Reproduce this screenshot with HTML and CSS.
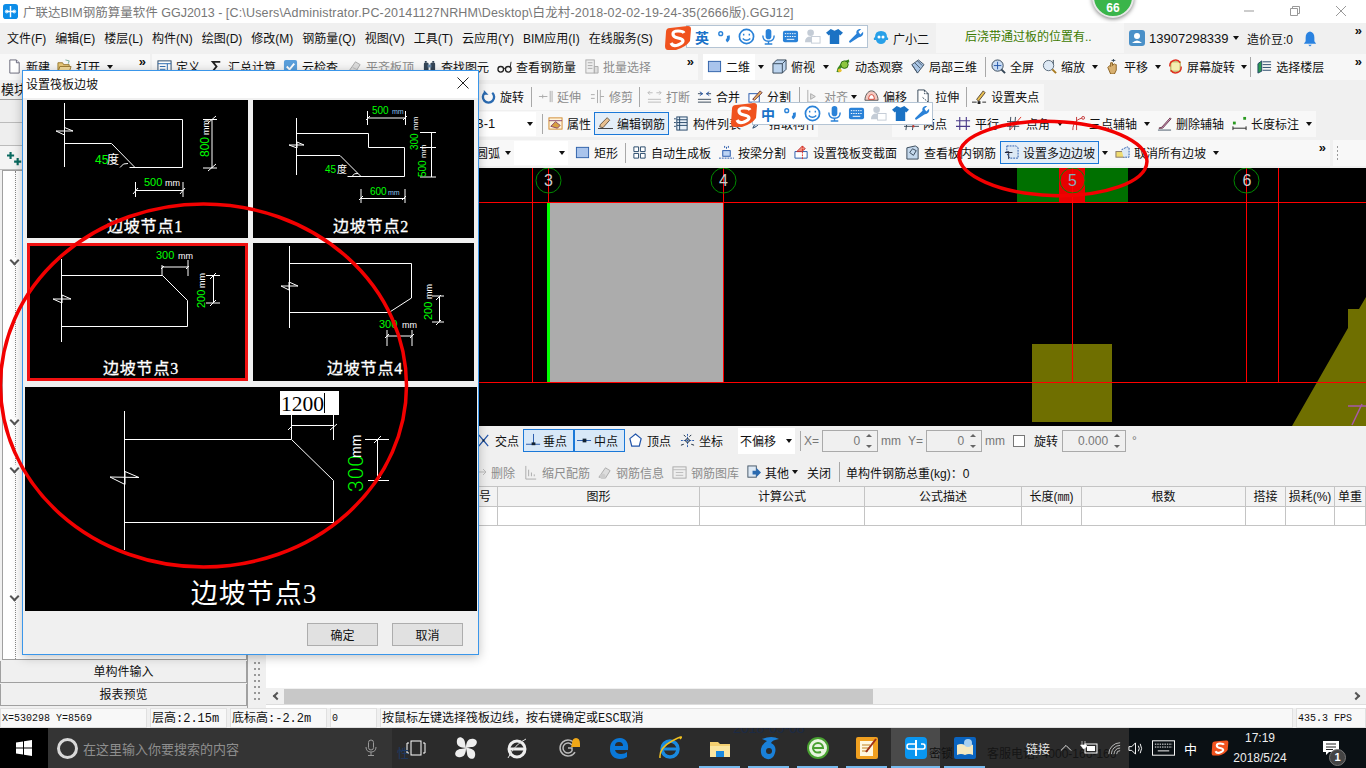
FILE: index.html
```html
<!DOCTYPE html>
<html lang="zh-CN">
<head>
<meta charset="utf-8">
<title>广联达BIM钢筋算量软件 GGJ2013</title>
<link rel="stylesheet" href="styles.css">
</head>
<body>
<svg class="defs" aria-hidden="true">
<symbol id="i-new" viewBox="0 0 16 16"><path d="M3 1h7l3 3v11H3z" fill="#fff" stroke="#667"/><path d="M10 1v3h3" fill="#dde" stroke="#667"/></symbol>
<symbol id="i-open" viewBox="0 0 16 16"><path d="M1 4h5l1 2h6v8H1z" fill="#e8c878" stroke="#9a7a30"/><path d="M3 8h12l-2 6H1z" fill="#f4dc9c" stroke="#9a7a30"/><path d="M9 1l4 1-1 3" fill="none" stroke="#7a9"/></symbol>
<symbol id="i-def" viewBox="0 0 16 16"><rect x="1" y="2" width="14" height="12" fill="#fff" stroke="#246"/><path d="M1 5h14M3 8h6M3 11h6M11 5v9" stroke="#2a6ab0"/></symbol>
<symbol id="i-sigma" viewBox="0 0 16 16"><path d="M12 3H4l4 5-4 5h8" fill="none" stroke="#222" stroke-width="2"/></symbol>
<symbol id="i-cloud" viewBox="0 0 16 16"><rect x="1" y="1" width="14" height="14" rx="2" fill="#5a9fdc"/><path d="M4 8l3 3 5-6" fill="none" stroke="#fff" stroke-width="2"/></symbol>
<symbol id="i-flat" viewBox="0 0 16 16"><path d="M2 13L9 3l5 3-5 8z" fill="#ddd" stroke="#aaa"/><path d="M6 9l6 3" stroke="#bbb"/></symbol>
<symbol id="i-find" viewBox="0 0 16 16"><rect x="2" y="4" width="5" height="9" rx="1" fill="#345"/><rect x="9" y="4" width="5" height="9" rx="1" fill="#345"/><path d="M6 6h4v3H6z" fill="#68a"/><path d="M4 2v2M12 2v2" stroke="#345" stroke-width="2"/></symbol>
<symbol id="i-glass" viewBox="0 0 16 16"><circle cx="4" cy="11" r="3" fill="none" stroke="#222" stroke-width="1.4"/><circle cx="12" cy="11" r="3" fill="none" stroke="#222" stroke-width="1.4"/><path d="M7 10h2M14 9l1-6" stroke="#222"/></symbol>
<symbol id="i-batch" viewBox="0 0 16 16"><rect x="2" y="1" width="9" height="14" fill="#eee" stroke="#aaa"/><path d="M4 4h5M4 7h5M4 10h5M11 8h4v7h-4z" fill="#ddd" stroke="#aaa"/></symbol>
<symbol id="i-sq" viewBox="0 0 16 16"><rect x="1.5" y="2.5" width="13" height="11" fill="#a9c4ec" stroke="#2d5fa8"/></symbol>
<symbol id="i-cube" viewBox="0 0 16 16"><path d="M1 5l4-4h10v10l-4 4H1z" fill="#bcd4ee" stroke="#345"/><path d="M1 5h10v10M11 5l4-4" fill="none" stroke="#345"/></symbol>
<symbol id="i-orbit" viewBox="0 0 16 16"><path d="M2 14C3 8 8 3 14 2" fill="none" stroke="#3a8a20" stroke-width="3"/><circle cx="9" cy="6" r="4" fill="#8cc63f" stroke="#2a6a10"/><circle cx="4" cy="12" r="2" fill="#e8c030"/></symbol>
<symbol id="i-l3d" viewBox="0 0 16 16"><path d="M2 6l7-5 6 5-7 9z" fill="#a8c4e4" stroke="#456"/><path d="M5 4l6 6M8 2l5 5M2 6l6 9" stroke="#456"/></symbol>
<symbol id="i-fs" viewBox="0 0 16 16"><circle cx="7" cy="7" r="6" fill="#c8dcf4" stroke="#345"/><path d="M7 3v8M3 7h8" stroke="#25a"/><path d="M11 11l4 4" stroke="#345" stroke-width="2"/></symbol>
<symbol id="i-zoom" viewBox="0 0 16 16"><circle cx="7" cy="7" r="5.5" fill="#dde8f4" stroke="#567"/><path d="M11 11l4 4" stroke="#a87a20" stroke-width="2"/><path d="M12 1v4" stroke="#345"/></symbol>
<symbol id="i-hand" viewBox="0 0 16 16"><path d="M3 9l2-2 1 1V4l2 0v3l2-2 1 1 1 0v6l-2 4H6z" fill="#d8b070" stroke="#8a6020"/><path d="M9 0v3M7 1.500h4" stroke="#345"/></symbol>
<symbol id="i-rot" viewBox="0 0 16 16"><rect x="3" y="3" width="10" height="10" fill="#f4eeb0" stroke="#a8a040"/><path d="M2 8a6 6 0 0 1 11-4M14 8a6 6 0 0 1-11 4" fill="none" stroke="#e03020" stroke-width="1.500"/></symbol>
<symbol id="i-floor" viewBox="0 0 16 16"><path d="M1 5l4-3v11l-4 2zM6 3h9M6 6h9M6 9h9M6 12h9" fill="#2a9a50" stroke="#246"/></symbol>
<symbol id="i-rotb" viewBox="0 0 16 16"><path d="M12 4a6 6 0 1 1-8 0" fill="none" stroke="#2a6ab0" stroke-width="2.500"/><path d="M3 1v5h5z" fill="#2a6ab0"/></symbol>
<symbol id="i-ext" viewBox="0 0 16 16"><path d="M1 8h9M4 8v0M13 2v12M15 2v12M5 6v4" fill="none" stroke="#aaa"/></symbol>
<symbol id="i-trim" viewBox="0 0 16 16"><path d="M1 6h4M1 10h4M8 1v14M11 1v14M11 8h4" fill="none" stroke="#aaa"/></symbol>
<symbol id="i-brk" viewBox="0 0 16 16"><path d="M1 4h5M10 4h5M1 11h14M1 14h14" stroke="#bbb"/><path d="M3 2L1 4l2 2M13 2l2 2-2 2" fill="none" stroke="#bbb"/></symbol>
<symbol id="i-mrg" viewBox="0 0 16 16"><path d="M1 5h5M10 5h5M1 11h14M1 14h14" stroke="#345"/><path d="M3 3l3 2-3 2M13 3l-3 2 3 2" fill="none" stroke="#25a"/></symbol>
<symbol id="i-spl" viewBox="0 0 16 16"><rect x="1" y="5" width="11" height="9" fill="#fff" stroke="#25a"/><path d="M5 11l8-9 2 2-8 8z" fill="#e8b060" stroke="#634"/></symbol>
<symbol id="i-aln" viewBox="0 0 16 16"><path d="M3 1v14M3 14h11M6 5l5 3-5 3z" fill="#ddd" stroke="#aaa"/></symbol>
<symbol id="i-off" viewBox="0 0 16 16"><path d="M1 12c0-5 3-10 7-10s7 5 7 10z" fill="#f4c8c0" stroke="#555"/><path d="M5 11c0-3 1-5 3-5s3 2 3 5z" fill="#fff" stroke="#d04030"/></symbol>
<symbol id="i-str" viewBox="0 0 16 16"><path d="M2 1h7l4 4v10H2z" fill="#fff" stroke="#345"/><path d="M9 1v4h4M7 9l6 5" fill="none" stroke="#345" stroke-dasharray="2 1"/></symbol>
<symbol id="i-grip" viewBox="0 0 16 16"><path d="M5 11L12 2l2 2-7 9z" fill="#e8c050" stroke="#543"/><path d="M0 14h5M11 14h4" stroke="#222"/><rect x="6" y="13" width="3" height="3" fill="#222"/></symbol>
<symbol id="i-attr" viewBox="0 0 16 16"><rect x="1" y="2" width="14" height="12" fill="#fff4dc" stroke="#d08a30"/><path d="M3 11l5-5 5 4-3 3zM1 5h14" fill="#d8a040" stroke="#846"/></symbol>
<symbol id="i-edit" viewBox="0 0 18 16"><path d="M2 12l4 1 8-9-3-3-8 8z" fill="#e8c090" stroke="#543"/><path d="M0 14h18" stroke="#222"/></symbol>
<symbol id="i-list" viewBox="0 0 16 16"><rect x="3" y="1" width="11" height="14" fill="#e8f0f8" stroke="#246"/><path d="M3 4h11M3 7h11M3 10h11M6 1v14" stroke="#246"/><path d="M0 3h2M0 7h2M0 11h2" stroke="#246"/></symbol>
<symbol id="i-pick" viewBox="0 0 16 16"><path d="M3 13l2-4 6-6 2 2-6 6z" fill="#cde" stroke="#246"/></symbol>
<symbol id="i-two" viewBox="0 0 16 16"><path d="M4 1L2 15M11 1L9 15M0 6h16M0 11h16" stroke="#345"/><rect x="3" y="5" width="2" height="2" fill="#2a9a20"/><rect x="9" y="10" width="2" height="2" fill="#e03020"/></symbol>
<symbol id="i-par" viewBox="0 0 16 16"><path d="M4 1v14M11 1v14M0 5h15M0 11h15" stroke="#4a3a8a" stroke-width="1.200"/></symbol>
<symbol id="i-ang" viewBox="0 0 16 16"><path d="M4 1L3 15M9 1L8 15M0 6h13M0 11h13" stroke="#345"/><path d="M3 15L15 1" stroke="#e03020"/></symbol>
<symbol id="i-thr" viewBox="0 0 16 16"><path d="M3 15C3 7 8 3 14 2M7 1v14" fill="none" stroke="#c03030"/><circle cx="14" cy="2" r="1.500" fill="#fff" stroke="#c03030"/></symbol>
<symbol id="i-del" viewBox="0 0 16 16"><path d="M2 13l3-1 9-10 1 1-9 10z" fill="#d8a0d0" stroke="#634"/><path d="M1 15h14" stroke="#456"/></symbol>
<symbol id="i-dim" viewBox="0 0 16 16"><path d="M1 11v4M15 11v4M1 13h14" stroke="#222"/><rect x="1" y="6" width="3" height="3" fill="#2a9a20"/><rect x="12" y="1" width="3" height="3" fill="#2a9a20"/></symbol>
<symbol id="i-auto" viewBox="0 0 16 16"><path d="M2 2h5v5H2zM9 2h5v5H9zM2 9h5v5H2zM9 9h5v5H9z" fill="#fff" stroke="#246"/></symbol>
<symbol id="i-beam" viewBox="0 0 16 16"><rect x="4" y="6" width="8" height="6" fill="#bcd4f4" stroke="#25a"/><path d="M0 14h16M6 1v2M10 1v2M8 2v2" stroke="#25a" stroke-dasharray="2 1"/></symbol>
<symbol id="i-sec" viewBox="0 0 16 16"><path d="M1 7h13v7H1z" fill="#fff" stroke="#25a"/><path d="M3 7l6-6 3 3-4 3z" fill="#f09080" stroke="#c03030"/><path d="M9 1v14" stroke="#e03020" stroke-dasharray="2 1"/></symbol>
<symbol id="i-view" viewBox="0 0 16 16"><path d="M2 3l9-2 3 2v12H2z" fill="#c4d8ec" stroke="#345"/><path d="M5 8l3-4 4 2-3 5z" fill="none" stroke="#345"/></symbol>
<symbol id="i-slope" viewBox="0 0 16 16"><path d="M3 1h10l2 2v11H6L3 9z" fill="#dce8f4" stroke="#25a" stroke-dasharray="2 1"/><path d="M5 15V7L1 8l8 0" fill="none" stroke="#223"/></symbol>
<symbol id="i-cancel" viewBox="0 0 16 16"><rect x="1" y="7" width="9" height="6" fill="#f0dc70" stroke="#876"/><path d="M7 5l6-3 2 1v10H9" fill="#dce8f4" stroke="#25a" stroke-dasharray="2 1"/></symbol>
<symbol id="i-x" viewBox="0 0 16 16"><path d="M3 2l5 6-5 6M13 2L8 8l5 6" fill="none" stroke="#25a" stroke-width="1.300"/><rect x="7" y="7" width="2" height="2" fill="#123"/></symbol>
<symbol id="i-perp" viewBox="0 0 16 16"><path d="M8 1v10M0 12h15" stroke="#25a"/><rect x="6" y="10" width="4" height="3" fill="#123"/></symbol>
<symbol id="i-mid" viewBox="0 0 16 16"><path d="M0 8h15" stroke="#25a"/><rect x="6" y="6" width="4" height="4" fill="#123"/></symbol>
<symbol id="i-pent" viewBox="0 0 16 16"><path d="M8 1l6 5-2 8H4L2 6z" fill="#fff" stroke="#25a" stroke-width="1.300"/></symbol>
<symbol id="i-coord" viewBox="0 0 16 16"><path d="M8 1v14M1 8h14" stroke="#25a" stroke-dasharray="2 1"/><path d="M4 2l2 2M12 2l-2 2M1 13l3-1M15 13l-3-1" stroke="#123"/><circle cx="8" cy="8" r="2" fill="none" stroke="#123"/></symbol>
<symbol id="i-dg" viewBox="0 0 12 12"><path d="M1 6h8M6 3l3 3-3 3M1 3v6" fill="none" stroke="#bbb"/></symbol>
<symbol id="i-sc" viewBox="0 0 16 16"><path d="M3 1v14M3 15h11M6 5v7M9 8v4M12 10v2" stroke="#aaa"/></symbol>
<symbol id="i-inf" viewBox="0 0 16 16"><path d="M2 13L9 3l5 3-5 8z" fill="#ddd" stroke="#aaa"/><circle cx="6" cy="12" r="3" fill="#ccc"/></symbol>
<symbol id="i-lib" viewBox="0 0 16 16"><rect x="1" y="2" width="14" height="12" fill="#eee" stroke="#aaa"/><path d="M1 5h14M4 8h8M4 11h8" stroke="#bbb"/></symbol>
<symbol id="i-oth" viewBox="0 0 16 16"><rect x="2" y="1" width="9" height="12" fill="#dce8f4" stroke="#456"/><path d="M7 6h4V3l5 5-5 5v-3H7z" fill="#2a6ab0"/></symbol>
<symbol id="s-logo" viewBox="0 0 28 24"><path d="M6 2l18-2q3 0 3 3l-1 12q-4 6-14 9l-8 0Q1 24 1 20L2 6q0-4 4-4z" fill="#f0521e"/><path d="M20 7q-1-2-6-2-5 0-5 3t5 4 5 3-5 4-7-2" fill="none" stroke="#fff" stroke-width="3.200"/></symbol>
<symbol id="s-dot" viewBox="0 0 18 18"><circle cx="5" cy="6" r="2" fill="none" stroke="#2a82d8" stroke-width="1.500"/><path d="M13 8q1 4-2 6" fill="none" stroke="#2a82d8" stroke-width="3"/></symbol>
<symbol id="s-smile" viewBox="0 0 18 18"><circle cx="9" cy="9" r="7.500" fill="#fff" stroke="#2a82d8" stroke-width="1.800"/><path d="M6 6v2M12 6v2M5 11q4 4 8 0" fill="none" stroke="#2a82d8" stroke-width="1.500"/></symbol>
<symbol id="s-mic" viewBox="0 0 18 18"><rect x="6" y="1" width="6" height="11" rx="3" fill="#2a82d8"/><path d="M3 8q0 6 6 6t6-6M9 14v3M5 17h8" fill="none" stroke="#2a82d8" stroke-width="1.500"/></symbol>
<symbol id="s-key" viewBox="0 0 18 18"><rect x="1" y="3" width="16" height="12" rx="2" fill="#2a82d8"/><path d="M3 6h12M3 9h12" stroke="#fff" stroke-dasharray="1.500 1"/><path d="M5 12h8" stroke="#fff"/></symbol>
<symbol id="s-user" viewBox="0 0 18 18"><circle cx="7" cy="5" r="3.500" fill="#c4ccd6"/><path d="M1 15q0-6 6-6h2v6z" fill="#c4ccd6"/><rect x="8" y="9" width="9" height="7" fill="#fff" stroke="#c4ccd6"/></symbol>
<symbol id="s-shirt" viewBox="0 0 18 18"><path d="M5 1l4 2 4-2 5 4-3 3-1-1v10H4V7L3 8 0 5z" fill="#1b72c4"/></symbol>
<symbol id="s-wr" viewBox="0 0 18 18"><path d="M2 16l-1-2 8-8q-1-4 3-5l2 0-3 3 2 3 3-3q1 5-5 6z" fill="#2a82d8"/></symbol>
</svg>

<div class="app">
  <header class="title">
    <svg class="applogo" viewBox="0 0 16 16"><rect width="16" height="16" rx="3" fill="#0d8de8"/><path d="M8 2v12M3 8h10" stroke="#fff" stroke-width="1.500"/><circle cx="4" cy="8" r="1.500" fill="none" stroke="#fff"/><circle cx="12" cy="8" r="1.500" fill="none" stroke="#fff"/></svg>
    <span class="title-text">广联达BIM钢筋算量软件 GGJ2013 - <span class="title-path">[C:\Users\Administrator.PC-20141127NRHM\Desktop\白龙村-2018-02-02-19-24-35(2666版).GGJ12]</span></span>
    <div class="winbtns">
      <svg class="wb" viewBox="0 0 12 12"><path d="M1 6h10" stroke="#999"/></svg>
      <svg class="wb" viewBox="0 0 12 12"><path d="M1.500 3.500h7v7h-7zM3.500 3V1.500h7v7H9" fill="none" stroke="#999"/></svg>
      <svg class="wb" viewBox="0 0 12 12"><path d="M1 1l10 10M11 1L1 11" stroke="#999"/></svg>
    </div>
  </header>

  <nav class="menu">
    <span>文件(F)</span><span>编辑(E)</span><span>楼层(L)</span><span>构件(N)</span><span>绘图(D)</span><span>修改(M)</span><span>钢筋量(Q)</span><span>视图(V)</span><span>工具(T)</span><span>云应用(Y)</span><span>BIM应用(I)</span><span>在线服务(S)</span>
    <div class="menu-right">
      <svg class="xiao" viewBox="0 0 16 16"><path d="M8 1q6 0 6 6 2 1 1 3l-2 0q-1 4-5 4t-5-4l-2 0q-1-2 1-3 0-6 6-6z" fill="#28a0e8"/><circle cx="6" cy="7" r="1.500" fill="#fff"/><circle cx="10" cy="7" r="1.500" fill="#fff"/></svg>
      <span class="xiao-t">广小二</span>
      <span class="marquee">后浇带通过板的位置有..</span>
      <svg class="user" viewBox="0 0 16 16"><rect width="16" height="16" rx="3" fill="#4a90c8"/><circle cx="8" cy="6" r="3" fill="#fff"/><path d="M3 13q5-5 10 0z" fill="#fff"/></svg>
      <span class="phone">13907298339</span><i class="ar m5"></i>
      <span class="bean">造价豆:0</span>
      <svg class="bell" viewBox="0 0 16 18"><path d="M8 1q5 1 5 7l0 4 2 3H1l2-3V8q0-6 5-7z" fill="#2a82e0"/><path d="M6 16h4l-2 2z" fill="#2a82e0"/></svg>
      <span class="more ml-a">»</span>
    </div>
  </nav>

  <div class="row r1">
    <div class="grp ga">
      <span class="it m7"><svg class="ic"><use href="#i-new"/></svg><b>新建</b></span>
      <span class="it m7"><svg class="ic"><use href="#i-open"/></svg><b>打开</b></span><i class="ar m6"></i>
      <span class="more ml-a">»</span>
    </div>
    <div class="grp gb">
      <span class="it m5"><svg class="ic"><use href="#i-def"/></svg><b>定义</b></span>
      <span class="it m9"><svg class="ic"><use href="#i-sigma"/></svg><b>汇总计算</b></span>
      <span class="it m7"><svg class="ic"><use href="#i-cloud"/></svg><b>云检查</b></span>
      <span class="it m9 dis"><svg class="ic"><use href="#i-flat"/></svg><b>平齐板顶</b></span>
      <span class="it m8"><svg class="ic"><use href="#i-find"/></svg><b>查找图元</b></span>
      <span class="it m8"><svg class="ic"><use href="#i-glass"/></svg><b>查看钢筋量</b></span>
      <span class="it m8 dis"><svg class="ic"><use href="#i-batch"/></svg><b>批量选择</b></span>
      <span class="more ml-a">»</span>
    </div>
    <div class="grp gc">
      <span class="it wbox"><svg class="ic"><use href="#i-sq"/></svg><b>二维</b></span><i class="ar m2"></i>
      <span class="it m8"><svg class="ic"><use href="#i-cube"/></svg><b>俯视</b></span><i class="ar m7"></i>
      <span class="it m7"><svg class="ic"><use href="#i-orbit"/></svg><b>动态观察</b></span>
      <span class="it m7"><svg class="ic"><use href="#i-l3d"/></svg><b>局部三维</b></span>
      <i class="sep m8"></i>
      <span class="it m5"><svg class="ic"><use href="#i-fs"/></svg><b>全屏</b></span>
      <span class="it m8"><svg class="ic"><use href="#i-zoom"/></svg><b>缩放</b></span><i class="ar m6"></i>
      <span class="it m7"><svg class="ic"><use href="#i-hand"/></svg><b>平移</b></span><i class="ar m6"></i>
      <span class="it m7"><svg class="ic"><use href="#i-rot"/></svg><b>屏幕旋转</b></span><i class="ar m5"></i>
      <i class="sep m3"></i>
      <span class="it m6"><svg class="ic"><use href="#i-floor"/></svg><b>选择楼层</b></span>
      <span class="more ml-a">»</span>
    </div>
  </div>

  <div class="work">
    <aside class="left">
      <div class="tabhead">模块</div>
      <div class="lbtn">工程设置</div>
      <div class="lbtn">绘图输入</div>
      <div class="ltools"><svg class="plus" viewBox="0 0 18 18"><path d="M4 1v8M0 5h8M12 8v8M8 12h8" stroke="#0a6a60" stroke-width="2.400"/></svg></div>
      <div class="tree">
        <span class="chev c1"></span><span class="chev c2"></span><span class="chev c3"></span><span class="chev c4"></span>
      </div>
      <div class="lfoot">单构件输入</div>
      <div class="lfoot">报表预览</div>
    </aside>
    <div class="split"><i class="dots"></i></div>
    <main class="right">
      <div class="row r2">
        <div class="grp t2a">
          <span class="it m0"><svg class="ic"><use href="#i-rotb"/></svg><b>旋转</b></span>
          <i class="sep m7"></i>
          <span class="it m6 dis"><svg class="ic"><use href="#i-ext"/></svg><b>延伸</b></span>
          <span class="it m9 dis"><svg class="ic"><use href="#i-trim"/></svg><b>修剪</b></span>
          <i class="sep m6"></i>
          <span class="it m7 dis"><svg class="ic"><use href="#i-brk"/></svg><b>打断</b></span>
          <span class="it m7"><svg class="ic"><use href="#i-mrg"/></svg><b>合并</b></span>
          <span class="it m8"><svg class="ic"><use href="#i-spl"/></svg><b>分割</b></span>
          <i class="sep m8"></i>
          <span class="it m5 dis"><svg class="ic"><use href="#i-aln"/></svg><b>对齐</b></span><i class="ar m2"></i>
          <span class="it m7"><svg class="ic"><use href="#i-off"/></svg><b>偏移</b></span>
          <span class="it m9"><svg class="ic"><use href="#i-str"/></svg><b>拉伸</b></span>
          <i class="sep m7"></i>
          <span class="it m5"><svg class="ic"><use href="#i-grip"/></svg><b>设置夹点</b></span>
        </div>
      </div>
      <div class="row r3">
        <div class="grp g3a">
          <span class="combo cb-a"><span class="cb-t">B-1</span><i class="ar"></i></span>
          <i class="sep m6"></i>
          <span class="it m5"><svg class="ic"><use href="#i-attr"/></svg><b>属性</b></span>
          <span class="it sel m3"><svg class="ic"><use href="#i-edit"/></svg><b>编辑钢筋</b></span>
          <span class="it m5"><svg class="ic"><use href="#i-list"/></svg><b>构件列表</b></span>
          <span class="it m9"><svg class="ic"><use href="#i-pick"/></svg><b>拾取构件</b></span>
        </div>
        <div class="grp g3b">
          <span class="it m12"><svg class="ic"><use href="#i-two"/></svg><b>两点</b></span>
          <span class="it m9"><svg class="ic"><use href="#i-par"/></svg><b>平行</b></span>
          <span class="it m8"><svg class="ic"><use href="#i-ang"/></svg><b>点角</b></span><i class="ar m6"></i>
          <span class="it m7"><svg class="ic"><use href="#i-thr"/></svg><b>三点辅轴</b></span><i class="ar m6"></i>
          <span class="it m7"><svg class="ic"><use href="#i-del"/></svg><b>删除辅轴</b></span>
          <span class="it m8"><svg class="ic"><use href="#i-dim"/></svg><b>长度标注</b></span><i class="ar m6"></i>
        </div>
      </div>
      <div class="row r4">
        <div class="grp t4a">
          <span class="t-arc">圆弧</span><i class="ar m4"></i>
          <span class="combo cb-b m3"><i class="ar"></i></span>
          <span class="it m7"><svg class="ic"><use href="#i-sq"/></svg><b>矩形</b></span>
          <i class="sep m7"></i>
          <span class="it m6"><svg class="ic"><use href="#i-auto"/></svg><b>自动生成板</b></span>
          <span class="it m8"><svg class="ic"><use href="#i-beam"/></svg><b>按梁分割</b></span>
          <span class="it m8"><svg class="ic"><use href="#i-sec"/></svg><b>设置筏板变截面</b></span>
          <span class="it m8"><svg class="ic"><use href="#i-view"/></svg><b>查看板内钢筋</b></span>
          <span class="it sel m4"><svg class="ic"><use href="#i-slope"/></svg><b>设置多边边坡</b></span><i class="ar m2"></i>
          <span class="it m7"><svg class="ic"><use href="#i-cancel"/></svg><b>取消所有边坡</b></span><i class="ar m6"></i>
          <span class="more ml-a">»</span>
        </div>
        <div class="gripbox"><i></i></div>
      </div>

      <svg class="canvas" viewBox="266 168 1100 258">
        <rect x="266" y="168" width="1100" height="258" fill="#000"/>
        <rect x="550" y="202" width="173" height="180" fill="#acacac"/>
        <rect x="1017" y="168" width="111" height="34" fill="#007000"/>
        <rect x="1059" y="168" width="26" height="34" fill="#e80000"/>
        <rect x="1032" y="344" width="80" height="78" fill="#6f6f00"/>
        <path d="M1292 426l56-98v-19h11l7-12v129z" fill="#6f6f00"/>
        <path d="M1348 406h18M1352 425l10-21" fill="none" stroke="#a858a8" stroke-width="1.500"/>
        <g class="grid">
          <rect x="266" y="202" width="1100" height="1"/><rect x="266" y="382" width="1100" height="1"/>
          <rect x="532" y="168" width="1" height="214"/><rect x="548" y="168" width="1" height="34"/>
          <rect x="723" y="168" width="1" height="214"/><rect x="1072" y="168" width="1" height="214"/><rect x="1246" y="168" width="1" height="214"/><rect x="1278" y="168" width="1" height="214"/>
        </g>
        <rect x="547" y="203" width="3" height="179" fill="#00ff00"/>
        <g class="axis">
          <circle cx="548.500" cy="180.500" r="12.500"/><circle cx="723.500" cy="180.500" r="12.500"/><circle cx="1072.500" cy="180.500" r="12.500"/><circle cx="1246.500" cy="180.500" r="12.500"/>
        </g>
        <g class="axt">
          <text x="548.500" y="186">3</text><text x="723.500" y="186">4</text><text class="axg" x="1072.500" y="186">5</text><text x="1247" y="186">6</text>
        </g>
      </svg>

      <div class="row snap">
        <span class="it m0 lead"><svg class="ic"><use href="#i-x"/></svg><b>交点</b></span>
        <span class="it sel snapsel m4"><svg class="ic"><use href="#i-perp"/></svg><b>垂点</b></span>
        <span class="it sel snapsel"><svg class="ic"><use href="#i-mid"/></svg><b>中点</b></span>
        <span class="it m3"><svg class="ic"><use href="#i-pent"/></svg><b>顶点</b></span>
        <span class="it m9"><svg class="ic"><use href="#i-coord"/></svg><b>坐标</b></span>
        <span class="combo cb-c m15">不偏移<i class="ar"></i></span>
        <i class="sep m5"></i>
        <span class="lbl m3">X=</span><span class="spin m3"><em>0</em><i class="sb"></i></span>
        <span class="lbl m3">mm</span><span class="lbl m7">Y=</span><span class="spin m3"><em>0</em><i class="sb"></i></span>
        <span class="lbl m3">mm</span>
        <i class="chk m8"></i>
        <span class="plain m9">旋转</span>
        <span class="spin sp-w m4"><em>0.000</em><i class="sb"></i></span>
        <span class="lbl m6">°</span>
      </div>

      <div class="row rebar">
        <span class="it lead2 dis"><svg class="ic"><use href="#i-dg"/></svg><b>删除</b></span>
        <span class="it m8 dis"><svg class="ic"><use href="#i-sc"/></svg><b>缩尺配筋</b></span>
        <span class="it m7 dis"><svg class="ic"><use href="#i-inf"/></svg><b>钢筋信息</b></span>
        <span class="it m8 dis"><svg class="ic"><use href="#i-lib"/></svg><b>钢筋图库</b></span>
        <span class="it m7"><svg class="ic"><use href="#i-oth"/></svg><b>其他</b></span><i class="ar m2"></i>
        <span class="plain m9">关闭</span>
        <i class="sep m8"></i>
        <span class="plain m6">单构件钢筋总重(kg)：0</span>
      </div>

      <div class="tbl">
        <div class="tr th"><span></span><span>筋号</span><span>图形</span><span>计算公式</span><span>公式描述</span><span>长度(㎜)</span><span>根数</span><span>搭接</span><span>损耗(%)</span><span>单重</span></div>
        <div class="tr td"><span></span><span></span><span></span><span></span><span></span><span></span><span></span><span></span><span></span><span></span></div>
      </div>
      <div class="blank"></div>
      <div class="hscroll"><i class="sa sa-l"></i><span class="thumb"></span><i class="sa sa-r"></i></div>
    </main>
  </div>

  <footer class="status">
    <span class="st s1">X=530298 Y=8569</span>
    <span class="st s2">层高:2.15m</span>
    <span class="st s3">底标高:-2.2m</span>
    <span class="st s4">0</span>
    <span class="st s5">按鼠标左键选择筏板边线，按右键确定或ESC取消</span>
    <span class="st s6">435.3 FPS</span>
  </footer>

  <div class="taskbar">
    <div class="start"><svg class="win" viewBox="0 0 16 16"><path d="M0 2.500l7-1v6H0zM8 1.300l8-1.300v7.500H8zM0 8.500h7v6l-7-1zM8 8.500h8V16l-8-1.300z" fill="#fff"/></svg></div>
    <div class="search">
      <i class="cortana"></i><span>在这里输入你要搜索的内容</span>
      <svg class="smic" viewBox="0 0 12 18"><rect x="3.500" y="1" width="5" height="10" rx="2.500" fill="none" stroke="#999"/><path d="M1 8q0 5 5 5t5-5M6 13v3M3 16.500h6" fill="none" stroke="#999"/></svg>
    </div>
    <div class="tasks">
      <span class="tv"><svg viewBox="0 0 20 16"><rect x="5" y="1" width="10" height="14" fill="none" stroke="#fff"/><path d="M3 3H1v10h2M17 3h2v10h-2" fill="none" stroke="#fff"/></svg></span>
      <span class="tk"><svg viewBox="0 0 24 24"><path d="M12 12C5 12 2 9 3 4s8-3 8 3zM12 12c0-7 3-10 8-9s3 8-3 8zM12 12c7 0 10 3 9 8s-8 3-8-3zM12 12c0 7-3 10-8 9s-3-8 3-8z" fill="#eee"/></svg></span>
      <span class="tk"><svg viewBox="0 0 24 24"><circle cx="12" cy="13" r="8" fill="none" stroke="#eee" stroke-width="3"/><path d="M5 13h14" stroke="#eee" stroke-width="3"/><path d="M3 22Q10 8 21 3" fill="none" stroke="#ddd"/></svg></span>
      <span class="tk"><svg viewBox="0 0 24 24"><path d="M19 16a8 8 0 1 1 0-8" fill="none" stroke="#bbb" stroke-width="1.500"/><path d="M16 15a5 5 0 1 1 0-6M12 12h4v3" fill="none" stroke="#bbb" stroke-width="1.500"/><path d="M16 8q0-6 4-6t4 6l1 3H15z" fill="#f0a818"/></svg></span>
      <span class="tk"><svg viewBox="0 0 24 24"><path d="M3 13C3 6 7 2 13 2s9 5 8 12H8q1 4 6 4 4 0 6-2v5q-3 2-7 2C7 23 3 19 3 13zM8 10h8q0-4-4-4t-4 4z" fill="#0a78d8"/></svg></span>
      <span class="tk"><svg viewBox="0 0 24 24"><circle cx="12" cy="13" r="8" fill="none" stroke="#1a8ae0" stroke-width="3.500"/><path d="M5 13h14" stroke="#1a8ae0" stroke-width="3"/><path d="M2 22Q1 12 14 5t8-2" fill="none" stroke="#f0c020" stroke-width="1.500"/></svg></span>
      <span class="tk t2 on"><svg viewBox="0 0 24 24"><path d="M2 6h8l2 2h10v13H2z" fill="#f4d070"/><path d="M2 10h20v11H2z" fill="#fbe6a0"/><rect x="8" y="15" width="8" height="6" fill="#1a8ae0"/></svg></span>
      <span class="tk t2 on"><svg viewBox="0 0 24 24"><path d="M5 3q10-4 17 0-7 1-8 4 6 3 4 10t-8 6Q3 21 4 13 5 8 10 5z" fill="#1a80d8"/><circle cx="12" cy="15" r="3" fill="#2b2b2b"/></svg></span>
      <span class="tk t2 on"><svg viewBox="0 0 24 24"><circle cx="12" cy="12" r="10" fill="#e8f4e0" stroke="#48a030" stroke-width="2"/><path d="M7 12a5 5 0 1 1 10 0H7zM7 13q2 5 8 3" fill="none" stroke="#48a030" stroke-width="2"/></svg></span>
      <span class="tk t2 on"><svg viewBox="0 0 24 24"><rect x="1" y="1" width="22" height="22" rx="2" fill="#f0a020"/><rect x="5" y="5" width="13" height="15" fill="#fff8e0"/><path d="M7 9h8M7 12h8M7 15h6" stroke="#c08020"/><path d="M11 16L21 3" stroke="#a03018" stroke-width="2"/></svg></span>
      <span class="tk t2 on act"><svg viewBox="0 0 24 24"><rect x="1" y="1" width="22" height="22" rx="4" fill="#0a96f0"/><path d="M12 4v16" stroke="#fff" stroke-width="2"/><path d="M12 8H5q-2 0-2 2.500T5 13h14q2 0 2-2.500T19 8h-2" fill="none" stroke="#fff" stroke-width="1.500"/></svg></span>
      <span class="tk t2 on"><svg viewBox="0 0 24 24"><rect x="1" y="1" width="22" height="22" rx="2" fill="#0a64c0"/><path d="M4 9q4-2 8 0 4-2 8 0v10q-4-2-8 0-4-2-8 0z" fill="#f4e8c0"/><circle cx="15" cy="7" r="4" fill="#a8d0f0"/></svg></span>
      <span class="ghost gh1">性</span><span class="ghost gh2">2018-05-08</span><span class="ghost gh3">密锁</span><span class="ghost gh4">客服电话: 4000-166-166</span>
      <span class="link">链接</span>
    </div>
    <div class="tray">
      <svg class="tc" viewBox="0 0 14 14"><path d="M1 10l6-6 6 6" fill="none" stroke="#fff"/></svg>
      <svg class="tb" viewBox="0 0 18 14"><rect x="5" y="3" width="12" height="9" fill="none" stroke="#fff"/><rect x="7" y="5" width="8" height="5" fill="#fff"/><path d="M2 0v4M5 0v4M0.500 4h6v2l-3 2z" fill="#fff" stroke="#fff" stroke-width=".6"/></svg>
      <svg class="tw" viewBox="0 0 16 16"><path d="M2 15A13 13 0 0 1 15 2M5 15A10 10 0 0 1 15 5M8 15a7 7 0 0 1 7-7M11 15a4 4 0 0 1 4-4" fill="none" stroke="#ccc"/></svg>
      <svg class="tv2" viewBox="0 0 16 16"><path d="M1 6h3l4-4v12l-4-4H1z" fill="none" stroke="#fff"/><path d="M11 5q2 3 0 6M13 3q3 5 0 10" fill="none" stroke="#fff"/></svg>
      <svg class="tk2" viewBox="0 0 24 16"><rect x=".5" y=".5" width="23" height="15" fill="none" stroke="#fff"/><path d="M3 4h18M3 7h18" stroke="#fff" stroke-dasharray="1.500 1"/><path d="M6 11h12" stroke="#fff"/></svg>
      <span class="ime">中</span>
      <svg class="ts" viewBox="0 0 28 24"><use href="#s-logo"/></svg>
      <div class="clock"><span>17:19</span><span>2018/5/24</span></div>
      <span class="note"><svg viewBox="0 0 16 14"><path d="M0 0h16v11H6l-3 3v-3H0z" fill="#fff"/><path d="M3 3h10M3 6h10M3 8.500h7" stroke="#222"/></svg><b>1</b></span>
    </div>
  </div>
</div>

<div class="badge"><span>66</span></div>

<div class="sg sg1">
  <svg class="sg-logo"><use href="#s-logo"/></svg>
  <span class="sg-lang">英</span>
  <svg class="sg-i"><use href="#s-dot"/></svg><svg class="sg-i"><use href="#s-smile"/></svg><svg class="sg-i"><use href="#s-mic"/></svg><svg class="sg-i"><use href="#s-key"/></svg><svg class="sg-i"><use href="#s-user"/></svg><svg class="sg-i"><use href="#s-shirt"/></svg><svg class="sg-i"><use href="#s-wr"/></svg>
</div>
<div class="sg sg2">
  <svg class="sg-logo"><use href="#s-logo"/></svg>
  <span class="sg-lang">中</span>
  <svg class="sg-i"><use href="#s-dot"/></svg><svg class="sg-i"><use href="#s-smile"/></svg><svg class="sg-i"><use href="#s-mic"/></svg><svg class="sg-i"><use href="#s-key"/></svg><svg class="sg-i"><use href="#s-user"/></svg><svg class="sg-i"><use href="#s-shirt"/></svg><svg class="sg-i"><use href="#s-wr"/></svg>
</div>

<section class="dialog">
  <div class="dlg-title"><span>设置筏板边坡</span><svg class="dlg-x" viewBox="0 0 12 12"><path d="M.5.500l11 11M11.500.500l-11 11" stroke="#222"/></svg></div>
  <div class="dlg-body">
    <div class="thumbs">
      <svg class="pn" viewBox="27 100 221 138">
        <rect x="27" y="100" width="221" height="138" fill="#000"/>
        <path class="dl" d="M64.500 103v64M64.500 119.500h118v48h-53M64.500 143.500h47l23.500 24M56 131h17l-8.500-3.500V135zM120 167.500q3-5 8-4M135.500 182v15M183 182v15M133 194l5-6M180 194l5-6M135.500 190.500h47.500M203 119.500h14M203 168h14M212 119v49M208 123l8-7M208 171l8-7"/>
        <text class="gt" x="95" y="164" font-size="12">45</text><text class="wt" x="107" y="164" font-size="12">度</text>
        <text class="gt" x="144" y="186" font-size="11">500</text><text class="wt" x="165" y="186" font-size="9">mm</text>
        <text class="gt" transform="translate(209 157) rotate(-90)" font-size="12">800</text><text class="wt" transform="translate(209 135) rotate(-90)" font-size="9">mm</text>
        <text class="pt" x="145" y="232">边坡节点1</text>
      </svg>
      <svg class="pn" viewBox="253 100 221 138">
        <rect x="253" y="100" width="221" height="138" fill="#000"/>
        <path class="dl" d="M296.500 118v57M296.500 133.500h72v14h36v29h-57M296.500 155.500h43.500l21 21M289 145h15l-7-3v6zM352 176.500q2-4 6-3M367.500 111v14M405.500 111v14M366 120l4-4M403 120l4-4M367.500 118h38M420 132.500h16M420 147.500h16M420 177h16M431.500 132v45M361 189v14M405 189v14M359 200l4-4M402 200l4-4M361 198.500h44"/>
        <text class="gt" x="372" y="114" font-size="10">500</text><text class="bt" x="392" y="114" font-size="7">mm</text>
        <text class="gt" x="325" y="173" font-size="10">45</text><text class="wt" x="337" y="173" font-size="10">度</text>
        <text class="gt" x="370" y="195" font-size="10">600</text><text class="bt" x="388" y="195" font-size="7">mm</text>
        <text class="gt" transform="translate(418 150) rotate(-90)" font-size="10">300</text><text class="wt" transform="translate(418 130) rotate(-90)" font-size="8">mm</text>
        <text class="gt" transform="translate(426 177) rotate(-90)" font-size="10">500</text><text class="wt" transform="translate(426 158) rotate(-90)" font-size="8">mm</text>
        <text class="pt" x="371" y="232">边坡节点2</text>
      </svg>
      <svg class="pn" viewBox="27 243 221 138">
        <rect x="27" y="243" width="221" height="138" fill="#000"/>
        <rect x="28.500" y="244.500" width="218" height="135" fill="none" stroke="#f01010" stroke-width="3"/>
        <path class="dl" d="M61.500 259v83M61.500 275.500h101l25 25v26h-126M53 299h18l-9-4v8zM162 265v11M188 260v16M161 269l3-3M186 269l3-3M162 267h26M206 275.500h14M206 303h14M213.500 275v28M210 279l6-6M210 306l6-6"/>
        <text class="gt" x="156" y="259" font-size="11">300</text><text class="wt" x="178" y="259" font-size="9">mm</text>
        <text class="gt" transform="translate(205 308) rotate(-90)" font-size="11">200</text><text class="wt" transform="translate(205 288) rotate(-90)" font-size="9">mm</text>
        <text class="pt" x="141" y="374">边坡节点3</text>
      </svg>
      <svg class="pn" viewBox="253 243 221 138">
        <rect x="253" y="243" width="221" height="138" fill="#000"/>
        <path class="dl" d="M289.500 246v82M289.500 263.500h122v34.500l-22.500 14.500h-100M281 286h17l-9-4v8zM387 330v16M412 330v16M385 338l4-4M410 338l4-4M387 336h25M432 296h12M432 322h12M439.500 296v26M436 300l5-5M436 325l5-5"/>
        <text class="gt" x="379" y="328" font-size="11">300</text><text class="wt" x="402" y="328" font-size="9">mm</text>
        <text class="gt" transform="translate(432 320) rotate(-90)" font-size="11">200</text><text class="wt" transform="translate(432 299) rotate(-90)" font-size="9">mm</text>
        <text class="pt" x="365" y="374">边坡节点4</text>
      </svg>
    </div>
    <svg class="big" viewBox="25 387 452 224">
      <rect x="25" y="387" width="452" height="224" fill="#000"/>
      <path class="dl" d="M124.500 411v139M124.500 439.500h167l42 41v42h-209M110 477l29 .5-14-6v13zM291.500 415v24M333.500 415v25M288 430l5-5M330 430l7-6M291.500 425.500h42M365 439.500h24M368 480.500h21M377.500 439v42M374 443l7-7M374 484l7-7"/>
      <rect x="280" y="391" width="59" height="24" fill="#fff"/>
      <text class="inp" x="281" y="411">1200</text><path d="M324.500 393v20" stroke="#000"/>
      <text class="gt thin" transform="translate(363 492) rotate(-90)" font-size="21" letter-spacing="1">300</text><text class="wt" transform="translate(361 458) rotate(-90)" font-size="14">mm</text>
      <text class="pb" x="254" y="603">边坡节点3</text>
    </svg>
    <div class="dlg-foot"><button class="btn">确定</button><button class="btn">取消</button></div>
  </div>
</section>

<svg class="marks" viewBox="0 0 1366 768">
  <ellipse cx="203.500" cy="385.500" rx="203" ry="181.500"/>
  <ellipse cx="1053" cy="158.500" rx="94" ry="37" transform="rotate(2 1053 158.500)"/>
</svg>
</body>
</html>
```

FILE: styles.css
```css
* { box-sizing: border-box; }
html, body { margin: 0; padding: 0; }
body { width: 1366px; height: 768px; overflow: hidden; position: relative; font-family: "Liberation Sans", "Noto Sans CJK SC", sans-serif; font-size: 12px; color: #111; background: #f0f0f0; }
.defs { position: absolute; width: 0; height: 0; }
i, em, b { font-style: normal; font-weight: normal; }
.app { display: flex; flex-direction: column; height: 768px; }

.title { height: 23px; background: #fff; display: flex; align-items: center; padding-left: 3px; padding-bottom: 1px; flex: none; }
.applogo { width: 15px; height: 15px; }
.title-text { margin-left: 5px; color: #777; font-size: 12.500px; white-space: nowrap; }
.title-path { letter-spacing: .17px; }
.winbtns { margin-left: auto; display: flex; width: 123px; gap: 34px; }
.wb { width: 12px; height: 12px; }

.menu { height: 30px; flex: none; display: flex; align-items: center; gap: 9px; padding-left: 7px; padding-bottom: 2px; background: #f0f0f0; white-space: nowrap; }
.menu-right { display: flex; align-items: center; position: absolute; left: 873px; top: 23px; height: 30px; width: 493px; }
.xiao { width: 16px; height: 16px; }
.xiao-t { margin-left: 4px; }
.marquee { margin-left: 7px; width: 188px; height: 30px; line-height: 28px; padding-left: 29px; background: #f6f6f6; color: #3c7a00; }
.user { width: 16px; height: 18px; margin-left: 5px; }
.phone { margin-left: 4px; font-size: 13px; width: 78px; }
.bean { margin-left: 8px; width: 48px; }
.bell { width: 14px; height: 17px; margin-left: 8px; }
.more { font-size: 13px; line-height: 10px; font-weight: bold; align-self: flex-start; margin-top: 3px; margin-right: 4px; }
.ml-a { margin-left: auto; }

.row { display: flex; flex: none; background: #f0f0f0; white-space: nowrap; align-items: center; }
.r1 { height: 29px; padding-bottom: 2px; }
.grp { display: flex; align-items: center; background: #f8f8f8; height: 26px; }
.ga { width: 150px; }
.gb { width: 546px; margin-left: 2px; }
.gc { width: 663px; margin-left: 5px; background: #f7f7f7; }
.wbox { background: #fff; height: 26px; padding: 0 5px 0 4px; }

.it { display: inline-flex; align-items: center; gap: 4px; }
.it b { display: block; }
.ic { width: 15px; height: 15px; flex: none; }
.dis { color: #8c8c8c; }
.ar { display: inline-block; width: 7px; height: 4px; flex: none; position: relative; }
.ar::before { content: ""; position: absolute; left: 1px; top: 0; border: 3px solid transparent; border-top: 4px solid #111; border-bottom: 0; }
.sep { width: 1px; height: 20px; background: #a8a8a8; flex: none; }
.sel { border: 1px solid #1a78d8; background: #e4eef8; height: 23px; padding: 0 3px; }

.m0 { margin-left: 0; } .m2 { margin-left: 2px; } .m3 { margin-left: 3px; } .m4 { margin-left: 4px; } .m5 { margin-left: 5px; }
.m6 { margin-left: 6px; } .m7 { margin-left: 7px; } .m8 { margin-left: 8px; } .m9 { margin-left: 9px; } .m12 { margin-left: 12px; } .m15 { margin-left: 15px; }

.work { flex: none; height: 626px; display: grid; grid-template-columns: 248px 18px 1fr; }
.left { display: flex; flex-direction: column; border-right: 1px solid #a0a0a0; overflow: hidden; }
.tabhead { height: 18px; line-height: 16px; font-size: 13px; padding-left: 1px; border-bottom: 1px solid #a0a0a0; flex: none; white-space: nowrap; overflow: hidden; }
.lbtn { height: 23px; flex: none; background: #eee; border-bottom: 1px solid #bbb; text-align: center; line-height: 22px; }
.ltools { height: 24px; flex: none; background: #f4f4f4; border-bottom: 1px solid #bbb; padding: 5px 0 0 7px; }
.plus { width: 16px; height: 16px; display: block; }
.tree { flex: none; height: 490px; position: relative; margin-left: 2px; border: 1px solid #a0a0a0; background: #fff; }
.tree::before { content: ""; position: absolute; left: 12px; top: 0; bottom: 0; border-left: 1px dotted #888; }
.chev { position: absolute; left: 8px; width: 7px; height: 7px; border-right: 2px solid #555; border-bottom: 2px solid #555; transform: rotate(45deg); background: #fff; }
.c1 { top: 86px; } .c2 { top: 246px; } .c3 { top: 294px; } .c4 { top: 422px; }
.lfoot { height: 22px; flex: none; background: #f0f0f0; border: 1px solid #a0a0a0; border-top: 0; margin-top: 1px; text-align: center; line-height: 23px; }

.split { background: #f0f0f0; position: relative; }
.dots { position: absolute; left: 5px; top: 578px; width: 7px; height: 42px; background-image: radial-gradient(#999 1px, transparent 1px); background-size: 4px 6px; }

.right { display: flex; flex-direction: column; min-width: 0; background: #fff; overflow: hidden; border-left: 1px solid #a0a0a0; margin-left: -1px; }
.r2 { height: 29px; }
.t2a { width: 778px; padding-left: 215px; height: 26px; }
.r3 { height: 28px; padding-bottom: 3px; }
.g3a { width: 552px; height: 26px; }
.cb-a { width: 270px; }
.combo { display: inline-flex; align-items: center; height: 24px; background: #fff; position: relative; flex: none; }
.combo .ar { margin-left: auto; margin-right: 3px; }
.cb-t { margin-left: 209px; font-size: 13px; }
.g3b { width: 424px; margin-left: 74px; height: 26px; }
.r4 { height: 29px; padding-bottom: 2px; }
.t4a { width: 1065px; padding-left: 210px; height: 26px; }
.t-arc { display: block; }
.cb-b { width: 54px; }
.gripbox { width: 33px; margin-left: 3px; height: 26px; background: #f8f8f8; position: relative; }
.gripbox i { position: absolute; left: 3px; top: 5px; width: 3px; height: 17px; background-image: radial-gradient(#999 1px, transparent 1px); background-size: 3px 4px; }

.canvas { display: block; width: 1100px; height: 258px; flex: none; }
.grid rect { fill: #ff0000; }
.axis circle { fill: none; stroke: #008a00; }
.axt text { fill: #ccc; font-size: 16px; text-anchor: middle; font-family: "Liberation Sans", sans-serif; }
.axt .axg { fill: #8ab; }

.snap { height: 32px; padding-left: 210px; padding-bottom: 3px; }
.lead { margin-left: 0; }
.snapsel { width: 51px; background: #d8e8f8; padding: 0 2px; gap: 2px; }
.cb-c { width: 57px; padding-left: 2px; height: 26px; }
.lbl { color: #777; }
.plain { display: block; }
.spin { width: 56px; height: 22px; border: 1px solid #aaa; background: #f0f0f0; display: flex; align-items: center; justify-content: flex-end; padding-right: 17px; position: relative; color: #777; }
.sp-w { width: 64px; }
.sb { position: absolute; right: 4px; top: 4px; width: 7px; height: 12px; }
.sb::before, .sb::after { content: ""; position: absolute; left: 0; border: 3px solid transparent; }
.sb::before { top: -1px; border-bottom: 3px solid #666; border-top: 0; }
.sb::after { bottom: -1px; border-top: 3px solid #666; border-bottom: 0; }
.chk { width: 12px; height: 12px; border: 1px solid #777; background: #fff; flex: none; }

.rebar { height: 28px; background: #f0f0f0; }
.lead2 { margin-left: 211px; gap: 2px; }
.lead2 .ic { width: 12px; height: 12px; }

.tbl { flex: none; background: #fff; }
.tr { display: grid; grid-template-columns: 195px 37px 202px 165px 157px 60px 164px 40px 49px 31px; }
.tr span { border-right: 1px solid #c4c4c4; border-bottom: 1px solid #c4c4c4; text-align: center; overflow: hidden; white-space: nowrap; }
.th span { height: 21px; line-height: 20px; background: #f3f3f3; border-top: 1px solid #c4c4c4; }
.td span { height: 19px; }
.blank { flex: 1; background: #fff; }
.hscroll { height: 17px; flex: none; background: #f0f0f0; display: flex; align-items: center; border-bottom: 1px solid #ddd; margin-bottom: 3px; }
.thumb { width: 589px; height: 15px; background: #c8c8c8; margin-left: 4px; }
.sa { width: 6px; height: 6px; border-left: 2px solid #555; border-bottom: 2px solid #555; flex: none; }
.sa-l { transform: rotate(45deg); margin-left: 8px; }
.sa-r { transform: rotate(225deg); margin-left: auto; margin-right: 7px; }

.status { height: 20px; flex: none; display: flex; gap: 3px; background: #f0f0f0; }
.st { height: 20px; line-height: 20px; background: #f8f8f8; border: 1px solid #e0e0e0; padding-left: 1px; font-family: "Liberation Mono", "Noto Sans CJK SC", monospace; font-size: 10px; white-space: nowrap; overflow: hidden; }
.s1 { width: 147px; } .s2 { width: 77px; } .s3 { width: 97px; } .s4 { width: 47px; } .s5 { width: 913px; } .s6 { width: 70px; }
.s2, .s3, .s5 { font-size: 12px; }

.taskbar { height: 40px; flex: none; display: flex; background: #2b2b2b; color: #fff; position: relative; }
.start { width: 48px; background: #000; display: flex; align-items: center; justify-content: center; }
.win { width: 16px; height: 16px; }
.search { width: 344px; background: #343434; display: flex; align-items: center; color: #8e8e8e; font-size: 13px; }
.cortana { width: 21px; height: 21px; border: 3px solid #d8d8d8; border-radius: 50%; margin-left: 9px; flex: none; }
.search span { margin-left: 5px; }
.smic { width: 12px; height: 18px; margin-left: auto; margin-right: 15px; }
.tasks { width: 737px; display: flex; align-items: center; position: relative; overflow: hidden; height: 40px; }
.tv { width: 48px; display: flex; justify-content: center; }
.tv svg { width: 20px; height: 16px; }
.tk { width: 51px; height: 40px; display: flex; align-items: center; justify-content: center; flex: none; }
.tk svg { width: 24px; height: 24px; }
.t2 { width: 49px; }
.on { position: relative; }
.on::after { content: ""; position: absolute; left: 4px; right: 4px; bottom: 0; height: 2px; background: #76b9ed; }
.act { background: #4a4a4a; }
.act::after { left: 0; right: 0; }
.ghost { position: absolute; white-space: nowrap; font-size: 12px; color: #111; }
.gh1 { left: 5px; top: 16px; color: #1c3a66; }
.gh2 { left: 341px; top: -8px; color: #1c2a44; font-size: 14px; }
.gh3 { left: 537px; top: 16px; }
.gh4 { left: 595px; top: 16px; color: #151515; }
.link { position: absolute; left: 634px; top: 12px; font-size: 12px; color: #e6e6e6; }
.tray { flex: 1; background: #0a1014; display: flex; align-items: center; position: relative; }
.tc { width: 12px; height: 12px; margin-left: -69px; position: relative; }
.tb { width: 18px; height: 14px; margin-left: 8px; position: relative; }
.tw { width: 14px; height: 14px; margin-left: 9px; position: relative; }
.tv2 { width: 15px; height: 15px; margin-left: 7px; }
.tk2 { width: 23px; height: 16px; margin-left: 9px; }
.ime { margin-left: 9px; font-size: 13px; }
.ts { width: 18px; height: 18px; margin-left: 14px; }
.clock { display: flex; flex-direction: column; align-items: center; width: 62px; margin-left: 0; line-height: 20px; color: #eee; font-size: 12px; }
.note { position: relative; width: 18px; height: 14px; margin-left: 32px; }
.note svg { width: 16px; height: 14px; display: block; }
.note b { position: absolute; left: 6px; top: 8px; width: 17px; height: 17px; border-radius: 50%; background: #444; border: 1px solid #777; text-align: center; line-height: 15px; font-weight: bold; font-size: 11px; }

.badge { position: absolute; left: 1092px; top: -24px; width: 42px; height: 42px; border-radius: 50%; background: #3ab54a; border: 2px solid #e8e8e8; box-shadow: 0 1px 4px rgba(0,0,0,.5); color: #fff; font-size: 12px; font-weight: bold; text-align: center; line-height: 60px; }

.sg { position: absolute; display: flex; align-items: center; height: 23px; background: #fff; border: 1px solid #b4c4d4; padding-left: 8px; }
.sg1 { left: 686px; top: 25px; width: 182px; }
.sg2 { left: 752px; top: 102px; width: 181px; }
.sg-logo { position: absolute; left: -23px; top: 0; width: 28px; height: 24px; }
.sg-lang { color: #1a72c8; font-weight: bold; font-size: 14px; margin-right: 2px; }
.sg-i { width: 17px; height: 17px; margin-left: 5px; flex: none; }

.dialog { position: absolute; left: 22px; top: 70px; width: 457px; height: 585px; border: 1px solid #3a96ea; background: #f0f0f0; box-shadow: 0 2px 10px rgba(0,0,0,.25); display: flex; flex-direction: column; }
.dlg-title { height: 27px; background: #fff; display: flex; align-items: center; padding-left: 3px; padding-bottom: 3px; flex: none; }
.dlg-x { width: 12px; height: 12px; margin-left: auto; margin-right: 9px; }
.dlg-body { flex: 1; display: flex; flex-direction: column; padding-top: 2px; }
.thumbs { display: grid; grid-template-columns: 221px 221px; gap: 5px; margin-left: 4px; }
.pn { width: 221px; height: 138px; display: block; }
.big { width: 452px; height: 224px; display: block; margin: 6px 0 0 2px; }
.dlg-foot { display: flex; justify-content: flex-end; gap: 14px; padding: 12px 15px 0 0; }
.btn { width: 71px; height: 23px; background: #e1e1e1; border: 1px solid #adadad; font: inherit; color: #111; padding: 0; }
.dl { fill: none; stroke: #fff; stroke-width: 1; }
.gt { fill: #00ff00; font-family: "Liberation Sans", sans-serif; }
.thin { font-family: Roboto, "Liberation Sans", sans-serif; font-weight: 300; }
.wt { fill: #fff; font-family: "Liberation Sans", "Noto Sans CJK SC", sans-serif; }
.bt { fill: #8cc4f0; font-family: "Liberation Sans", sans-serif; }
.pt { fill: #fff; stroke: #fff; stroke-width: .3px; font-size: 16px; text-anchor: middle; font-family: "Liberation Serif", "Noto Sans CJK SC", serif; letter-spacing: .8px; }
.pb { fill: #fff; font-size: 27px; text-anchor: middle; font-family: "Liberation Serif", "Noto Sans CJK SC", serif; letter-spacing: 1px; }
.inp { fill: #000; font-size: 21.500px; font-family: "Liberation Serif", serif; }

.marks { position: absolute; left: 0; top: 0; width: 1366px; height: 768px; pointer-events: none; }
.marks ellipse { fill: none; stroke: #f20000; stroke-width: 3.500; }
```
